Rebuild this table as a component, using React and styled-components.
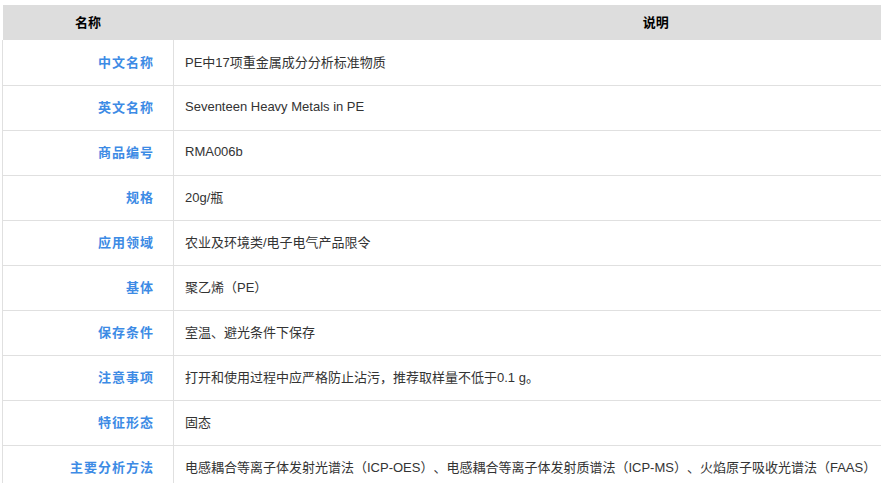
import React from "react";
import styled, { createGlobalStyle } from "styled-components";

const GlobalStyle = createGlobalStyle`
  html, body {
    margin: 0;
    padding: 0;
    overflow: hidden;
    background: #fff;
  }
  body {
    padding: 5px 0 0 2px;
    font-family: "Liberation Sans", Arial, "Noto Sans CJK SC", sans-serif;
    text-spacing-trim: space-all;
  }
`;

const rows = [
  ["中文名称", "PE中17项重金属成分分析标准物质"],
  ["英文名称", "Seventeen Heavy Metals in PE"],
  ["商品编号", "RMA006b"],
  ["规格", "20g/瓶"],
  ["应用领域", "农业及环境类/电子电气产品限令"],
  ["基体", "聚乙烯（PE）"],
  ["保存条件", "室温、避光条件下保存"],
  ["注意事项", "打开和使用过程中应严格防止沾污，推荐取样量不低于0.1 g。"],
  ["特征形态", "固态"],
  [
    "主要分析方法",
    "电感耦合等离子体发射光谱法（ICP-OES）、电感耦合等离子体发射质谱法（ICP-MS）、火焰原子吸收光谱法（FAAS）",
  ],
];

const Table = styled.table`
  width: 1136px;
  border-collapse: collapse;
  table-layout: fixed;
  font-size: 13px;
  color: #333;
`;

const HeadCell = styled.th`
  box-sizing: border-box;
  height: 35px;
  padding: 0 0 2px;
  background: #dddddd;
  color: #000;
  font-weight: bold;
  text-align: center;
  width: ${(p) => p.$width || "auto"};
`;

const Row = styled.tr`
  border-bottom: 1px solid #e0e0e0;
`;

const Label = styled.td`
  box-sizing: border-box;
  height: 45px;
  padding: 0 19px 2px 0;
  text-align: right;
  color: #3d8be5;
  font-weight: bold;
  letter-spacing: 1px;
  border-left: 1px solid #e0e0e0;
  border-right: 1px solid #e0e0e0;
  white-space: nowrap;
`;

const Value = styled.td`
  box-sizing: border-box;
  height: 45px;
  padding: 0 0 2px 11px;
  text-align: left;
  white-space: nowrap;
`;

export default function App() {
  return (
    <>
      <GlobalStyle />
      <Table>
        <thead>
          <tr>
            <HeadCell $width="171px">名称</HeadCell>
            <HeadCell>说明</HeadCell>
          </tr>
        </thead>
        <tbody>
          {rows.map(([k, v]) => (
            <Row key={k}>
              <Label>{k}</Label>
              <Value>{v}</Value>
            </Row>
          ))}
        </tbody>
      </Table>
    </>
  );
}
